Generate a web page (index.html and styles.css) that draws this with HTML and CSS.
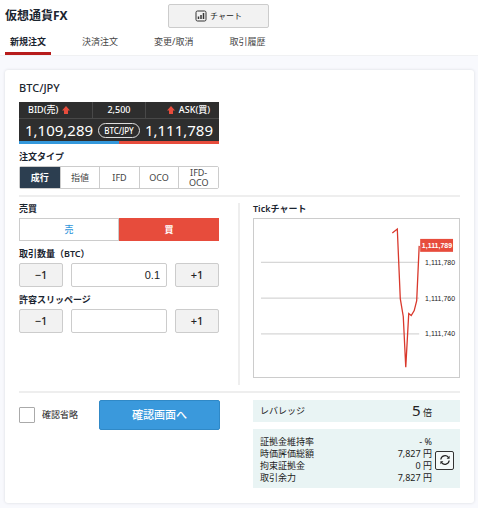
FILE: index.html
```
<!DOCTYPE html>
<html lang="ja">
<head>
  <meta charset="UTF-8" />
  <meta name="viewport" content="width=device-width, initial-scale=1">
  <title>仮想通貨FX</title>
  <link rel="stylesheet" href="styles.css">
</head>

<body>
  <header class="header">
    <div class="header-top">
      <h1 class="title">仮想通貨FX</h1>
      <button type="button" class="btn chart-button">
        <svg class="chart-icon" viewBox="0 0 12 12" aria-hidden="true">
          <rect x="1" y="1" width="10" height="10" rx="1.5" fill="none" stroke="#333" stroke-width="1" />
          <path d="M3.5 9V6.5M6 9V5M8.5 9V3" stroke="#333" stroke-width="1.5" />
        </svg>
        チャート
      </button>
    </div>
    <nav class="tabs">
      <a href="#" class="tab active">新規注文</a>
      <a href="#" class="tab">決済注文</a>
      <a href="#" class="tab">変更/取消</a>
      <a href="#" class="tab">取引履歴</a>
    </nav>
  </header>

  <main class="card">
    <!-- Rate and order type -->
    <section class="rate-section">
      <h2 class="pair">BTC/JPY</h2>
      <div class="rate">
        <div class="rate-head">
          <div class="rate-side bid">BID(売)
            <svg class="arrow" viewBox="0 0 8 8" aria-hidden="true"><path d="M4 0L8 4.5H6V8H2V4.5H0Z" fill="#e74c3c" /></svg>
          </div>
          <div class="spread">2,500</div>
          <div class="rate-side ask">
            <svg class="arrow" viewBox="0 0 8 8" aria-hidden="true"><path d="M4 0L8 4.5H6V8H2V4.5H0Z" fill="#e74c3c" /></svg>
            ASK(買)</div>
        </div>
        <div class="rate-body">
          <span class="price">1,109,289</span>
          <span class="pill">BTC/JPY</span>
          <span class="price">1,111,789</span>
        </div>
      </div>

      <div class="label" id="type-label">注文タイプ</div>
      <div class="order-types" role="group" aria-labelledby="type-label">
        <button type="button" class="type selected">成行</button>
        <button type="button" class="type">指値</button>
        <button type="button" class="type">IFD</button>
        <button type="button" class="type">OCO</button>
        <button type="button" class="type">IFD-<br>OCO</button>
      </div>
    </section>

    <!-- Order form and tick chart -->
    <section class="columns order-section">
      <div class="order-form">
        <div class="label" id="side-label">売買</div>
        <div class="sides" role="group" aria-labelledby="side-label">
          <button type="button" class="side sell">売</button>
          <button type="button" class="side buy">買</button>
        </div>

        <label class="label" for="amount">取引数量（BTC）</label>
        <div class="stepper">
          <button type="button" class="btn step">−1</button>
          <input type="text" id="amount" class="number" value="0.1">
          <button type="button" class="btn step">+1</button>
        </div>

        <label class="label" for="slippage">許容スリッページ</label>
        <div class="stepper">
          <button type="button" class="btn step">−1</button>
          <input type="text" id="slippage" class="number">
          <button type="button" class="btn step">+1</button>
        </div>
      </div>

      <div class="tick">
        <h2 class="label">Tickチャート</h2>
        <svg class="tick-chart" viewBox="0 0 206 159" role="img" aria-label="Tickチャート">
          <path d="M7 43.5H166M7 79.5H166M7 115.5H166" stroke="#ccc" />
          <polyline points="139,14 144,10 147,80 150,98 152.500,149 155.500,95 158,97 161,92 163.500,82 166,27" fill="none" stroke="#d9382c" stroke-width="1.3" />
          <rect x="167" y="20" width="33" height="13" fill="#e74c3c" />
          <text x="199" y="29" class="tick-now">1,111,789</text>
          <text x="202" y="46" class="tick-text">1,111,780</text>
          <text x="202" y="82" class="tick-text">1,111,760</text>
          <text x="202" y="118" class="tick-text">1,111,740</text>
        </svg>
      </div>
    </section>

    <!-- Confirm and account summary -->
    <section class="columns bottom-section">
      <div class="confirm">
        <label class="skip">
          <input type="checkbox" class="checkbox">
          確認省略
        </label>
        <button type="button" class="confirm-button">確認画面へ</button>
      </div>

      <div class="summary">
        <div class="leverage">
          <span>レバレッジ</span>
          <span><span class="leverage-value">5</span> 倍</span>
        </div>
        <div class="account">
          <dl class="account-list">
            <div class="account-row"><dt>証拠金維持率</dt><dd>- %</dd></div>
            <div class="account-row"><dt>時価評価総額</dt><dd>7,827 円</dd></div>
            <div class="account-row"><dt>拘束証拠金</dt><dd>0 円</dd></div>
            <div class="account-row"><dt>取引余力</dt><dd>7,827 円</dd></div>
          </dl>
          <button type="button" class="refresh" aria-label="更新">
            <svg class="refresh-icon" viewBox="0 0 12 12" aria-hidden="true">
              <path d="M1.800 5.500A4.300 4.300 0 0 1 9.400 3.300M10.200 6.500A4.300 4.300 0 0 1 2.600 8.700" fill="none" stroke="#222" stroke-width="1.200" />
              <path d="M10.600 1.800V4.800H7.600ZM1.400 10.200V7.200H4.400Z" fill="#222" />
            </svg>
          </button>
        </div>
      </div>
    </section>
  </main>
</body>
</html>
```

FILE: styles.css
```
* {
  margin: 0;
  padding: 0;
  box-sizing: border-box;
}

body {
  background-color: #f8f9fd;
  color: #222;
  font-family: 'Noto Sans', 'Noto Sans CJK JP', sans-serif;
  font-size: 9px;
  line-height: 12px;
}

button,
input {
  font: inherit;
  color: inherit;
}

button {
  cursor: pointer;
}

.header {
  background-color: white;
  border-bottom: 1px solid #f0f1f3;
  padding: 3px 5px 0;
}

.header-top {
  display: grid;
  grid-template-columns: 163px 101px;
  align-items: center;
}

.title {
  font-size: 12px;
  line-height: 26px;
  color: #1b2530;
}

.btn {
  background-color: #f2f2f2;
  border: 1px solid #ccc;
  border-radius: 2px;
}

.chart-button {
  display: flex;
  align-items: center;
  justify-content: center;
  gap: 3px;
  height: 24px;
  font-size: 8px;
}

.chart-icon {
  width: 12px;
  height: 12px;
}

.tabs {
  display: flex;
  gap: 26px;
}

.tab {
  padding: 7px 5px 4px;
  border-bottom: 3px solid transparent;
  color: #444;
  text-decoration: none;
}

.tab.active {
  border-color: #b71c1c;
  color: #1b2530;
  font-weight: bold;
}

.card {
  margin: 14px 4px 4px 5px;
  padding: 12px 14px 15px;
  background-color: white;
  border-radius: 3px;
  box-shadow: 0 0 3px #d8dade;
}

.pair {
  margin-bottom: 8px;
  color: #1b2530;
  font-size: 11px;
  font-weight: 500;
  line-height: 12px;
}

.label {
  display: block;
  margin-bottom: 3px;
  color: #1b2530;
  font-size: 9px;
  font-weight: 600;
  line-height: 12px;
}

/* Rate panel */
.rate {
  width: 200px;
  margin-bottom: 7px;
  background-color: #2e2e2e;
  color: white;
}

.rate::after {
  content: '';
  display: block;
  height: 3px;
  background: linear-gradient(to right, #3498db 50%, #e74c3c 50%);
}

.rate-head {
  display: grid;
  grid-template-columns: 73px 1fr 73px;
  border-bottom: 1px solid #484848;
  font-weight: 500;
  line-height: 16px;
}

.rate-side {
  display: flex;
  align-items: center;
  gap: 4px;
  padding: 0 9px;
}

.ask {
  justify-content: flex-end;
}

.arrow {
  width: 8px;
  height: 8px;
}

.spread {
  border: solid #484848;
  border-width: 0 1px;
  text-align: center;
}

.rate-body {
  display: flex;
  align-items: center;
  justify-content: space-between;
  height: 22px;
  padding: 0 6px;
}

.price {
  font-size: 15px;
}

.pill {
  padding: 0 5px;
  border: 1px solid #ddd;
  border-radius: 8px;
  font-size: 8px;
  font-weight: 500;
  line-height: 13px;
}

.order-types {
  display: grid;
  grid-template-columns: repeat(5, 1fr);
  width: 200px;
  height: 23px;
  border: 1px solid #ccc;
  border-radius: 2px;
}

.type {
  border: 0;
  border-left: 1px solid #ccc;
  background-color: white;
  color: #444;
  line-height: 10px;
}

.type.selected {
  border: 0;
  background-color: #2c3e50;
  color: white;
  font-weight: bold;
}

.rate-section {
  padding-bottom: 6px;
}

/* Two column areas */
.columns {
  display: grid;
  grid-template-columns: 221px 1fr;
  border-top: 2px solid #eee;
  padding-top: 7px;
}

.order-section {
  padding-top: 6px;
  padding-bottom: 6px;
}

.order-form {
  padding-right: 19px;
  border-right: 2px solid #eee;
}

.sides {
  display: grid;
  grid-template-columns: 1fr 1fr;
  height: 23px;
  margin-bottom: 7px;
}

.side {
  border: 1px solid #ccc;
  background-color: white;
  color: #3498db;
  font-weight: 500;
}

.side.buy {
  border-color: #e74c3c;
  background-color: #e74c3c;
  color: white;
  font-weight: bold;
}

.stepper {
  display: grid;
  grid-template-columns: 44px 1fr 44px;
  gap: 8px;
  height: 24px;
  margin-bottom: 7px;
}

.step {
  font-size: 11px;
  font-weight: 500;
}

.number {
  width: 100%;
  padding: 0 6px;
  border: 1px solid #ccc;
  border-radius: 2px;
  font-family: 'Liberation Sans', Arial, sans-serif;
  font-size: 11px;
  text-align: right;
}

.tick {
  padding-left: 13px;
  padding-bottom: 7px;
}

.tick-chart {
  display: block;
  width: 100%;
  border: 1px solid #ccc;
}

.tick-text,
.tick-now {
  font-family: 'Liberation Sans', Arial, sans-serif;
  font-size: 7px;
  text-anchor: end;
  fill: #222;
}

.tick-now {
  font-weight: bold;
  fill: white;
}

/* Confirm */
.confirm {
  display: flex;
  align-items: flex-start;
  justify-content: space-between;
  padding-right: 20px;
}

.skip {
  display: flex;
  align-items: center;
  gap: 7px;
  height: 30px;
}

.checkbox {
  width: 16px;
  height: 16px;
  appearance: none;
  border: 1px solid #aaa;
  border-radius: 1px;
}

.confirm-button {
  width: 121px;
  height: 30px;
  border: 1px solid #3089c7;
  border-radius: 2px;
  background-color: #3a99dc;
  color: white;
  font-size: 11px;
  font-weight: 500;
}

.summary {
  padding-left: 13px;
}

.leverage {
  display: flex;
  align-items: center;
  justify-content: space-between;
  height: 22px;
  margin-bottom: 7px;
  padding: 0 28px 0 7px;
  background-color: #e9f4f4;
}

.leverage-value {
  font-size: 15px;
}

.account {
  display: flex;
  align-items: center;
  gap: 3px;
  padding: 7px 6px 4px 7px;
  background-color: #e9f4f4;
}

.account-list {
  flex: 1;
}

.account-row {
  display: flex;
  justify-content: space-between;
}

.refresh {
  display: flex;
  align-items: center;
  justify-content: center;
  width: 19px;
  height: 19px;
  border: 1px solid #333;
  border-radius: 2px;
  background-color: #f4f9f9;
}

.refresh-icon {
  width: 12px;
  height: 12px;
}
```
